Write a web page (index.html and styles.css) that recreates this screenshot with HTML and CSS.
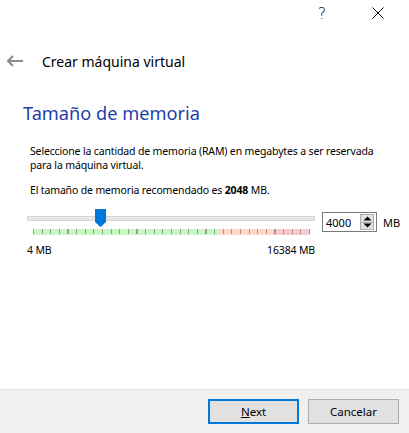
FILE: index.html
```html
<!DOCTYPE html>
<html lang="es">
<head>
<meta charset="utf-8">
<title>Crear máquina virtual</title>
<link rel="stylesheet" href="styles.css">
</head>
<body>
<div class="window">
  <div class="titlebar">
    <span class="cap-btn help">?</span>
    <span class="cap-btn close">
      <svg width="12" height="12" viewBox="0 0 12 12"><path d="M0.5 0.5 L11.5 11.5 M11.5 0.5 L0.5 11.5" stroke="#000" stroke-width="1" fill="none"/></svg>
    </span>
  </div>
  <div class="header">
    <svg class="back" width="16" height="12" viewBox="0 0 16 12"><path d="M1 6 H16 M6 1 L1 6 L6 11" stroke="#8a8a8a" stroke-width="2" fill="none"/></svg>
    <span class="header-title">Crear máquina virtual</span>
  </div>
  <h1 class="page-title">Tamaño de memoria</h1>
  <div class="content">
    <p class="text">Seleccione la cantidad de memoria (RAM) en megabytes a ser reservada para la máquina virtual.</p>
    <p class="text rec">El tamaño de memoria recomendado es <b>2048</b> MB.</p>
    <div class="slider-row">
      <div class="slider">
        <div class="track"></div>
        <svg class="thumb" width="11" height="18" viewBox="0 0 11 18"><path d="M0 0 H11 V13 L5.5 18 L0 13 Z" fill="#0078d7"/></svg>
        <div class="scale"></div>
      </div>
      <div class="spin">
        <span class="spin-val">4000</span>
        <span class="spin-btns">
          <span class="spin-btn"><svg width="9" height="5" viewBox="0 0 9 5"><path d="M0.5 4.5 L4.5 0.5 L8.5 4.5 Z" fill="#000"/></svg></span>
          <span class="spin-btn"><svg width="9" height="5" viewBox="0 0 9 5"><path d="M0.5 0.5 L4.5 4.5 L8.5 0.5 Z" fill="#000"/></svg></span>
        </span>
      </div>
      <span class="unit">MB</span>
    </div>
    <div class="labels">
      <span>4 MB</span>
      <span>16384 MB</span>
    </div>
  </div>
  <div class="footer">
    <button class="btn primary"><u>N</u>ext</button>
    <button class="btn">Cancelar</button>
  </div>
</div>
</body>
</html>
```

FILE: styles.css
```css
* { box-sizing: border-box; }
html, body { margin: 0; padding: 0; background: #fff; }
body { font-family: "Noto Sans", "Open Sans", sans-serif; color: #000; }
.window {
  width: 409px;
  height: 433px;
  display: flex;
  flex-direction: column;
  background: #fff;
}
.titlebar {
  height: 30px;
  display: flex;
  justify-content: flex-end;
  align-items: center;
  padding-right: 25px;
  flex: none;
}
.cap-btn {
  display: flex;
  align-items: center;
  justify-content: center;
}
.help {
  font-family: "DejaVu Sans", sans-serif;
  font-size: 16px;
  font-weight: 200;
  width: 12px;
  margin-right: 44px;
  padding-bottom: 3px;
  color: #111;
}
.close { width: 12px; padding-bottom: 4px; }
.header {
  display: flex;
  align-items: center;
  height: 22px;
  margin-top: 20px;
  padding-left: 7px;
  flex: none;
}
.back { margin-right: 19px; }
.header-title { font-size: 14px; }
.page-title {
  margin: 27px 0 0 23px;
  font-size: 18.2px;
  font-weight: 400;
  color: #1f3fa9;
  line-height: 28px;
}
.content {
  padding-left: 27px;
  font-size: 10.5px;
  letter-spacing: -0.15px;
}
.text { margin: 0 0 0 3px; line-height: 14px; width: 356px; }
.content .text:first-child { margin-top: 17px; }
.rec { margin-top: 11px !important; }
.rec b { font-weight: 700; }
.slider-row {
  display: flex;
  align-items: flex-start;
  margin-top: 12px;
  height: 26px;
}
.slider {
  position: relative;
  width: 288px;
  height: 27px;
}
.track {
  position: absolute;
  left: 0; right: 0;
  top: 7px;
  height: 5px;
  background: #e7e7e7;
  border: 1px solid #d6d6d6;
}
.thumb { position: absolute; left: 68px; top: 0; }
.scale {
  position: absolute;
  left: 6px;
  top: 20px;
  width: 277px;
  height: 6px;
  background:
    repeating-linear-gradient(to right, #a09a90 0 1px, transparent 1px 8.625px) 0 0 / 100% 5px no-repeat,
    linear-gradient(to right, #c8f8c4 0 187px, #ffd9c4 187px 240px, #ffc8c8 240px);
}
.spin {
  margin-left: 7px;
  margin-top: 3px;
  width: 55px;
  height: 20px;
  border: 1px solid #7a7a7a;
  display: flex;
  align-items: center;
  justify-content: space-between;
  padding: 1px 2px 1px 3px;
  font-size: 11px;
  letter-spacing: 0;
}
.spin-btns {
  display: flex;
  flex-direction: column;
  width: 14px;
  height: 16px;
  border: 1px solid #adadad;
  background: #e1e1e1;
}
.spin-btn {
  flex: 1;
  display: flex;
  align-items: center;
  justify-content: center;
}
.spin-btn + .spin-btn { border-top: 1px solid #adadad; }
.unit { margin-left: 6px; margin-top: 6px; font-size: 11px; letter-spacing: 0; }
.labels {
  display: flex;
  justify-content: space-between;
  width: 288px;
  margin-top: 8px;
}
.footer {
  margin-top: auto;
  height: 44px;
  background: #f0f0f0;
  border-top: 1px solid #dfdfdf;
  display: flex;
  justify-content: flex-end;
  align-items: flex-start;
  padding: 9px 10px 0 0;
  gap: 9px;
  flex: none;
}
.btn {
  width: 91px;
  height: 25px;
  background: #e1e1e1;
  border: 1px solid #adadad;
  font-family: "Noto Sans", sans-serif;
  font-size: 11.5px;
  color: #000;
  padding: 0;
}
.btn.primary { border: 2px solid #0078d7; }
```
